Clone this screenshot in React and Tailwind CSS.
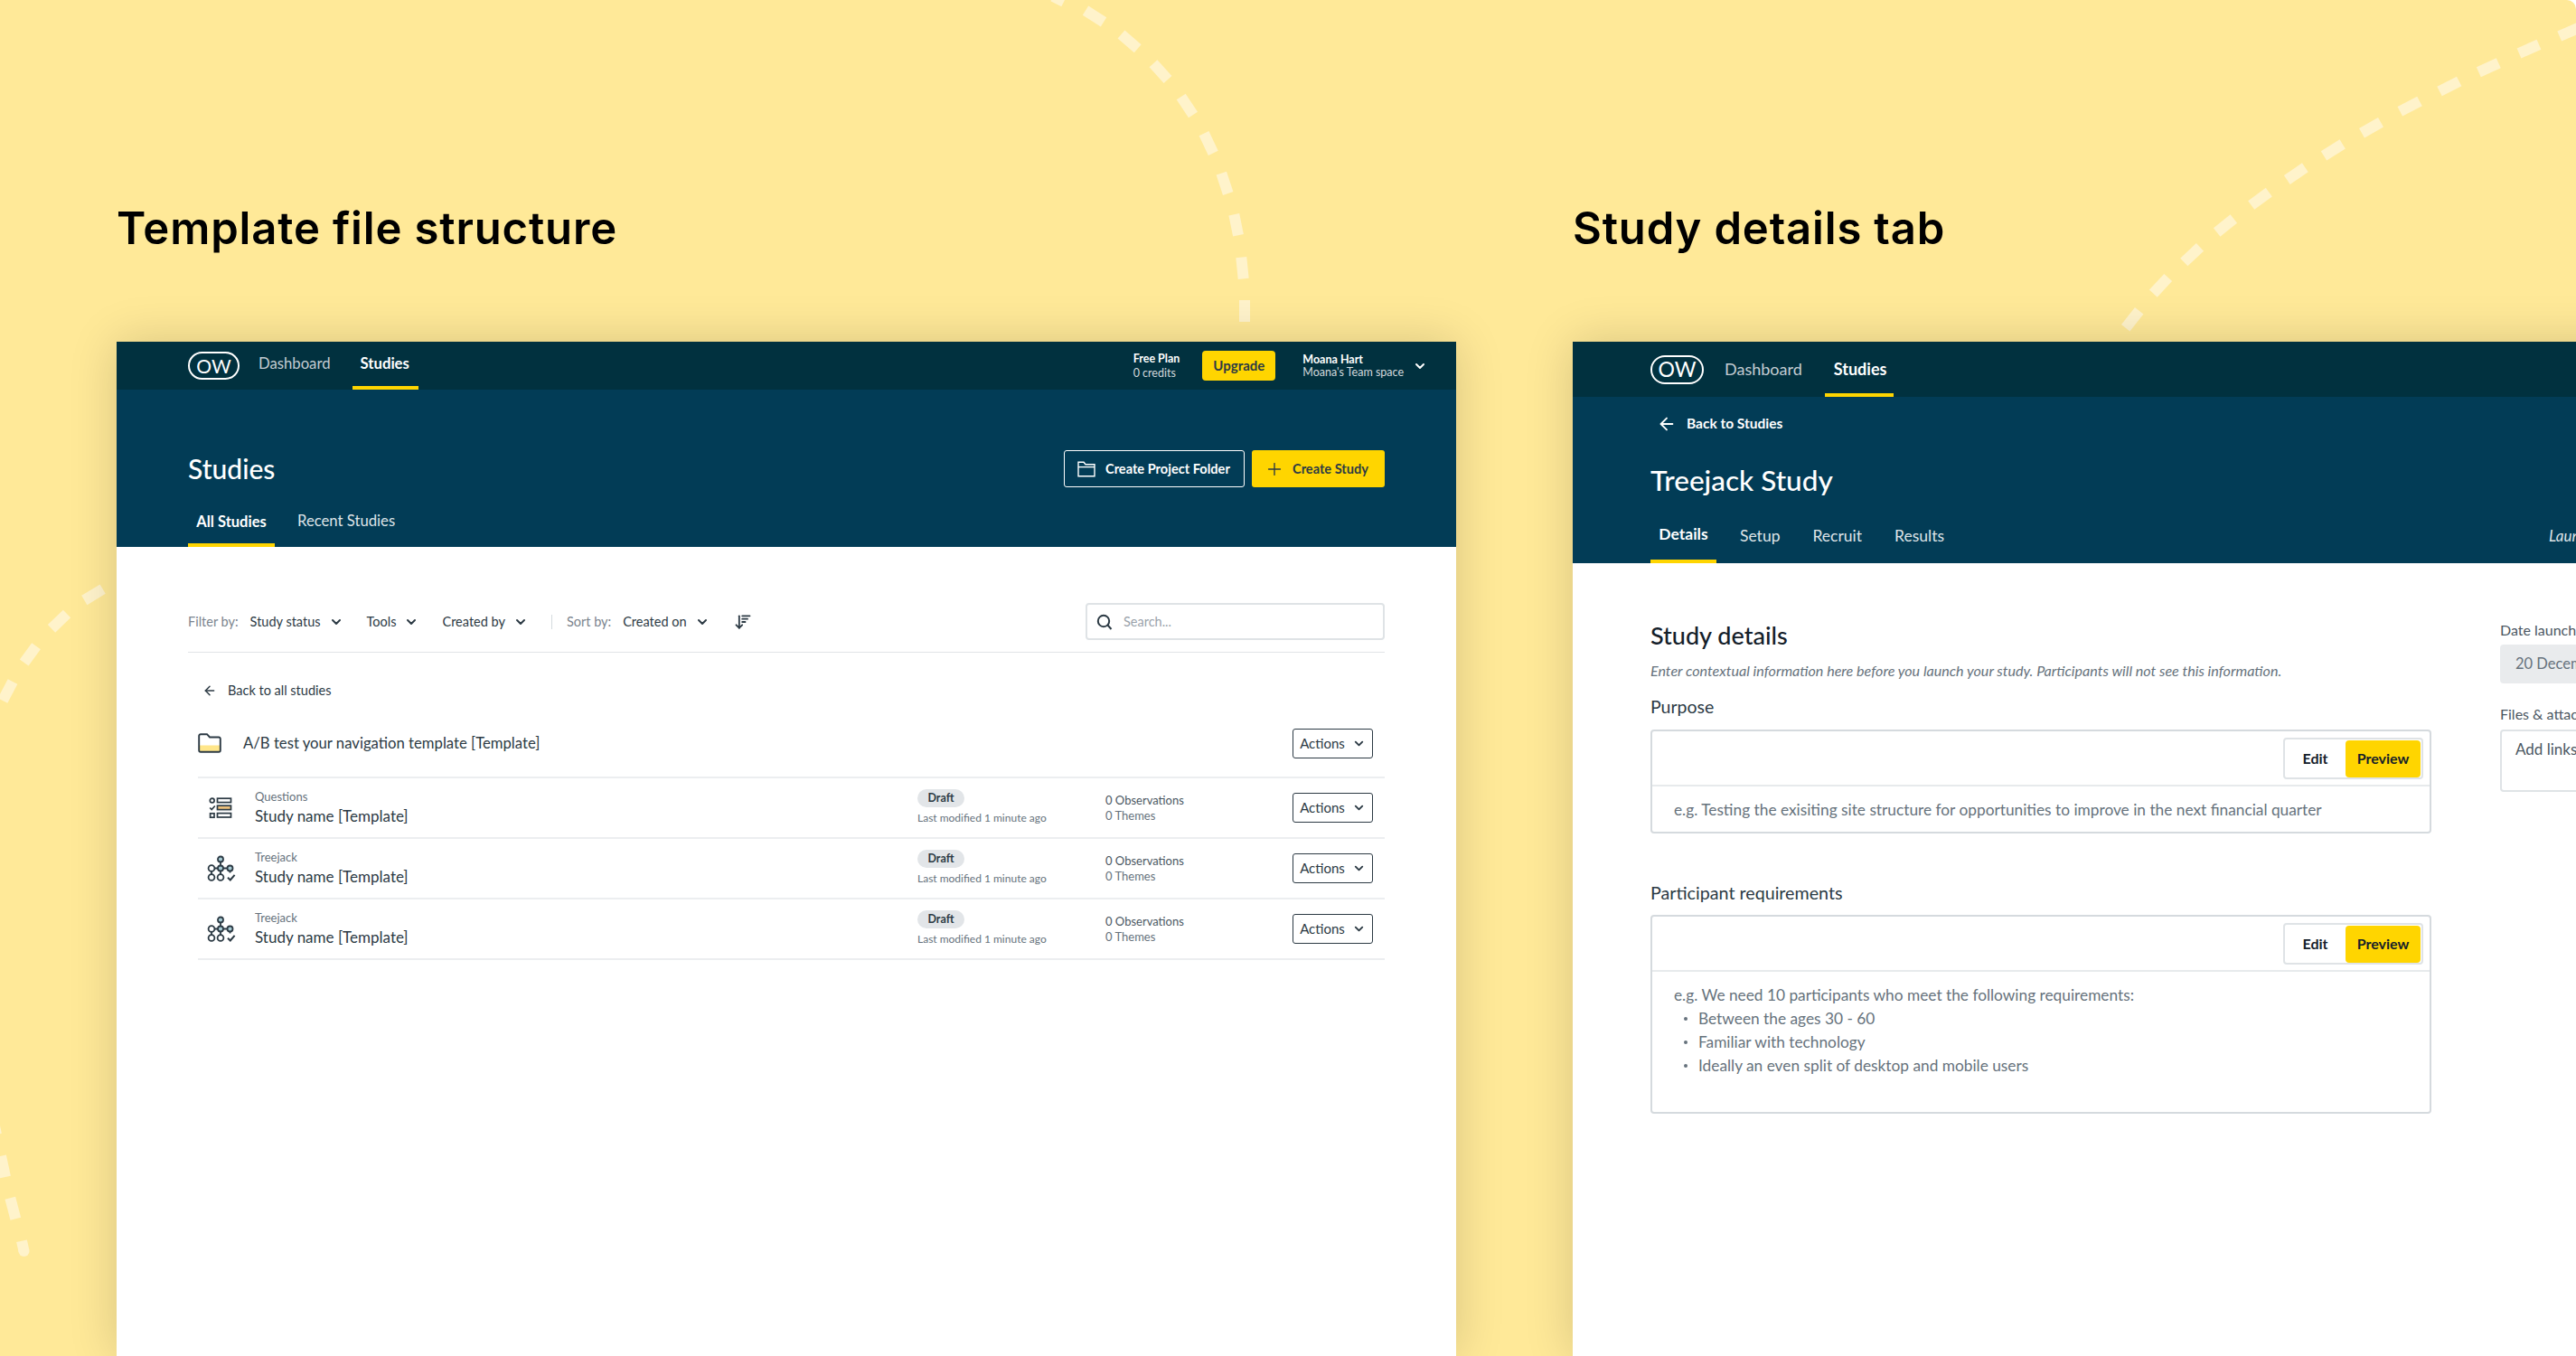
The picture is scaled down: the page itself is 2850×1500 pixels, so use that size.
import { ArrowLeft, ChevronDown, Plus, ArrowDownWideNarrow } from 'lucide-react';

// dash segments of the three background curves, taken from the reference
const dashes = [
    [1165, -4, 1177, 2], [1201, 11.7, 1221, 24.3], [1240.5, 38, 1258.7, 53.7], [1276, 70.3, 1292, 88],
    [1306.7, 107, 1320, 127], [1332, 147.7, 1342.3, 169.3], [1351.3, 191.7, 1358.7, 214], [1365.3, 237.3, 1370, 260.3],
    [1373.3, 284.7, 1375.7, 308.3], [1377, 332, 1377, 356],
    [2366.7, 343.7, 2351.7, 362.7], [2398.7, 307, 2382.3, 324.7], [2434, 273.3, 2416.3, 290], [2471.3, 242, 2452.7, 257],
    [2510.3, 212.7, 2490.7, 227], [2550.3, 185.3, 2530.3, 199], [2591.7, 159.3, 2571, 172.3], [2634, 135.3, 2613, 147.3],
    [2677, 112, 2655.3, 123.3], [2720.7, 90, 2699, 101], [2764.3, 69.7, 2742.3, 79.7], [2809, 49.3, 2787, 59], [2831.7, 40, 2855, 30],
    [113.7, 651.7, 93.3, 664], [74, 679, 57, 695.3], [40, 714.7, 26.7, 733], [14, 754, 3, 775],
    [-4, 1255, -9, 1232], [1, 1278.7, 6, 1302], [11.3, 1325.3, 17.3, 1348.3], [24, 1372.7, 26.5, 1384],
];

const rows = [
    { id: 1, type: 'Questions' },
    { id: 2, type: 'Treejack' },
    { id: 3, type: 'Treejack' },
];

const Dashes = () => (
    <svg className="absolute inset-0" width="2850" height="1500" viewBox="0 0 2850 1500" fill="none">
        {dashes.map((d, i) => (
            <line key={i} x1={d[0]} y1={d[1]} x2={d[2]} y2={d[3]} stroke="#fff3cb" strokeWidth="12" />
        ))}
        <circle cx="26.5" cy="1384" r="6" fill="#fff3cb" />
    </svg>
);

const Logo = ({ big }) => (
    <div className={big
        ? 'flex h-[32px] w-[59px] items-center justify-center rounded-[16px] border-2 border-white text-[23px] leading-none text-white'
        : 'flex h-[31px] w-[57px] items-center justify-center rounded-[16px] border-2 border-white text-[21px] leading-none text-white'}>
        OW
    </div>
);

const FolderOutline = () => (
    <svg width="20" height="18" viewBox="0 0 20 18" fill="none" stroke="#fff" strokeWidth="1.4">
        <path d="M1 1.2h6l2 2.6h10v13H1z" />
        <path d="M1 6.6h18" />
    </svg>
);

const FolderYellow = () => (
    <svg width="26" height="22" viewBox="0 0 26 22" fill="none">
        <path d="M1.2 13.5h23.6v5.5a1.8 1.8 0 0 1-1.8 1.8H3a1.8 1.8 0 0 1-1.8-1.8z" fill="#ffe68a" />
        <path d="M1.2 3a1.8 1.8 0 0 1 1.8-1.8h7l3 3.3h10a1.8 1.8 0 0 1 1.8 1.8V19a1.8 1.8 0 0 1-1.8 1.8H3A1.8 1.8 0 0 1 1.2 19z" stroke="#2c3a44" strokeWidth="1.9" />
    </svg>
);

const QuestionsIcon = () => (
    <svg width="26" height="24" viewBox="0 0 26 24" fill="none" stroke="#2c3a44" strokeWidth="1.7">
        <circle cx="3.7" cy="3.5" r="2.4" />
        <rect x="9.5" y="1.2" width="15" height="4.4" />
        <path d="M1.2 11.5l2 2 3.6-4" />
        <rect x="9.5" y="9.2" width="15" height="4.4" fill="#efc27c" />
        <rect x="1.6" y="17.8" width="4.4" height="4.4" />
        <rect x="9.5" y="17.6" width="15" height="4.4" />
    </svg>
);

const TreejackIcon = () => (
    <svg width="32" height="30" viewBox="0 0 32 30" fill="none" stroke="#2c3a44" strokeWidth="1.8">
        <circle cx="15" cy="4.5" r="3" fill="#a9cdd6" />
        <path d="M15 7.5v6M8.5 14.5h3.5M18 14.5h4.5M5 18v3M15 17.5v3.5" />
        <circle cx="5" cy="14.5" r="3.4" />
        <circle cx="15" cy="14.5" r="3" fill="#a9cdd6" />
        <circle cx="25.5" cy="14.5" r="3" fill="#a9cdd6" />
        <circle cx="5" cy="24.5" r="3.4" />
        <circle cx="15" cy="24.5" r="3.4" />
        <path d="M23 24.8l2.8 2.7 4.8-5.6" strokeWidth="2" />
        <path d="M25.5 17.5v2" />
    </svg>
);

const SearchIcon = () => (
    <svg width="18" height="18" viewBox="0 0 18 18" fill="none" stroke="#2c3a44" strokeWidth="2">
        <circle cx="8" cy="8" r="6.2" />
        <path d="M12.5 12.5l4 4.5" />
    </svg>
);

const Chevron = ({ className }) => <ChevronDown className={className} strokeWidth={3} />;

const NavLink = ({ active, big, children }) => (
    <div className={`flex h-full items-center border-b-4 ${big ? 'pt-[3px]' : 'pt-[1px]'} ${active
        ? 'border-[#ffd500] font-bold text-white'
        : 'border-transparent text-[#c3ccd2]'}`}>
        <span className={big ? 'px-[10px] text-[18px]' : 'px-[9px] text-[16.7px]'}>{children}</span>
    </div>
);

const Filter = ({ label, className }) => (
    <div className={`flex items-center text-[14.5px] text-[#2c3a44] ${className}`}>
        {label}
        <Chevron className="ml-[9px] h-[16px] w-[16px]" />
    </div>
);

const ActionsButton = () => (
    <div className="flex h-[33px] w-[89px] items-center justify-center gap-[8px] rounded-[3px] border border-[#2c3a44] bg-white text-[15px] text-[#2c3a44]">
        Actions
        <Chevron className="h-[15px] w-[15px]" />
    </div>
);

const StudyRow = ({ type }) => (
    <div className="grid h-[67px] grid-cols-[63px_733px_208px_1fr] items-center border-b-2 border-[#eceef0]">
        <div className={type === 'Questions' ? 'flex pl-[12px]' : 'flex pl-[10px]'}>
            {type === 'Questions' ? <QuestionsIcon /> : <TreejackIcon />}
        </div>
        <div>
            <p className="text-[13px] leading-[16px] text-[#66727c]">{type}</p>
            <p className="mt-[3px] text-[17px] leading-[22px] text-[#2c3a44]">Study name [Template]</p>
        </div>
        <div>
            <div className="flex h-[20px] w-[52px] items-center justify-center rounded-full bg-[#e2e5e8] text-[12.5px] font-bold text-[#2c3a44]">Draft</div>
            <p className="mt-[3px] text-[12px] leading-[18px] text-[#66727c]">Last modified 1 minute ago</p>
        </div>
        <div className="flex items-center justify-between pr-[13px]">
            <div className="text-[13px] leading-[17px] text-[#4b5762]">
                <p>0 Observations</p>
                <p className="text-[#66727c]">0 Themes</p>
            </div>
            <ActionsButton />
        </div>
    </div>
);

const EditorBox = ({ height, children }) => (
    <div className={`${height} rounded-[4px] border-2 border-[#d5dade]`}>
        <div className="flex h-[61px] justify-end border-b-2 border-[#e7eaec] pt-[7px] pr-[7px]">
            <div className="flex h-[46px] w-[155px] items-center justify-between rounded-[4px] border-2 border-[#dfe3e6] pr-[1px]">
                <span className="w-[68px] text-center text-[16px] font-bold text-[#14202a]">Edit</span>
                <span className="flex h-[41px] w-[84px] items-center justify-center rounded-[4px] bg-[#ffd500] text-[16px] font-bold text-[#14202a]">Preview</span>
            </div>
        </div>
        <div className="px-[24px] text-[17.3px] leading-[26px] text-[#66727c]">{children}</div>
    </div>
);

export default function App() {
    return (
        <div className="relative flex h-[1500px] w-[2850px] overflow-hidden rounded-tr-[10px] bg-[#ffe998] font-['Lato',sans-serif]">
            <Dashes />

            <div className="relative ml-[129px] w-[1482px] shrink-0">
                <h2 className="flex h-[378px] items-start pt-[223px] font-['Inter',sans-serif] text-[49px] leading-[60px] font-semibold tracking-[0.85px] text-black">Template file structure</h2>
                <div className="h-[1122px] bg-white shadow-[0_0_50px_rgba(0,0,0,0.16)]">
                    <div className="flex h-[53px] items-center bg-[#01313f] pr-[32px] pl-[79px]">
                        <Logo />
                        <div className="ml-[12px] flex h-full items-center">
                            <NavLink>Dashboard</NavLink>
                            <div className="ml-[15px] h-full w-[73px]"><NavLink active>Studies</NavLink></div>
                        </div>
                        <div className="ml-auto flex items-center">
                            <div className="text-[12.5px] leading-[16px] text-white">
                                <p className="font-bold">Free Plan</p>
                                <p className="text-[#d3d9dd]">0 credits</p>
                            </div>
                            <div className="ml-[25px] flex h-[33px] w-[81px] items-center justify-center rounded-[4px] bg-[#ffd500] text-[15px] font-bold text-[#2c3a44]">Upgrade</div>
                            <div className="ml-[30px] text-[12.5px] leading-[14px] text-white">
                                <p className="font-bold">Moana Hart</p>
                                <p className="text-[#d3d9dd]">Moana's Team space</p>
                            </div>
                            <Chevron className="ml-[10px] h-[16px] w-[16px] text-white" />
                        </div>
                    </div>

                    <div className="flex h-[174px] flex-col justify-end bg-[#023c56] px-[79px]">
                        <div className="flex items-center justify-between">
                            <h1 className="text-[30px] leading-[41px] font-medium text-white">Studies</h1>
                            <div className="flex gap-[8px]">
                                <div className="flex h-[41px] w-[200px] items-center gap-[11px] rounded-[3px] border border-white pl-[14px] text-[14.6px] font-bold text-white">
                                    <FolderOutline />
                                    Create Project Folder
                                </div>
                                <div className="flex h-[41px] w-[147px] items-center gap-[9px] rounded-[3px] bg-[#ffd500] pl-[14px] text-[14.6px] font-bold text-[#2c3a44]">
                                    <Plus className="h-[22px] w-[22px]" strokeWidth={1.5} />
                                    Create Study
                                </div>
                            </div>
                        </div>
                        <div className="mt-[10px] flex h-[56px] items-end gap-[16px]">
                            <div className="flex h-full w-[96px] items-center justify-center border-b-4 border-[#ffd500] pt-[4px] text-[16.5px] font-bold text-white">All Studies</div>
                            <div className="flex h-full items-center px-[9px] text-[16.7px] text-[#dfe4e8]">Recent Studies</div>
                        </div>
                    </div>

                    <div className="px-[79px]">
                        <div className="flex items-center border-b border-[#e1e4e7] pt-[62px] pb-[13px]">
                            <span className="text-[14.5px] text-[#7b858e]">Filter by:</span>
                            <Filter label="Study status" className="ml-[13px]" />
                            <Filter label="Tools" className="ml-[26px]" />
                            <Filter label="Created by" className="ml-[26px]" />
                            <div className="mr-[16px] ml-[26px] h-[16px] w-[1px] bg-[#d5dade]" />
                            <span className="text-[14.5px] text-[#7b858e]">Sort by:</span>
                            <Filter label="Created on" className="ml-[13px]" />
                            <ArrowDownWideNarrow className="ml-[27px] h-[20px] w-[20px] text-[#2c3a44]" strokeWidth={2.2} />
                            <div className="ml-auto flex h-[41px] w-[331px] items-center gap-[12px] rounded-[4px] border-2 border-[#dfe3e6] pl-[10px] text-[14.5px] text-[#9aa3ab]">
                                <SearchIcon />
                                Search...
                            </div>
                        </div>

                        <div className="ml-[11px]">
                            <div className="flex h-[64px] items-center gap-[12px] pt-[20px] pl-[5px] text-[14.5px] text-[#2c3a44]">
                                <ArrowLeft className="h-[16px] w-[16px]" strokeWidth={2.2} />
                                Back to all studies
                            </div>
                            <div className="flex h-[75px] items-center justify-between border-b-2 border-[#eceef0] pr-[13px]">
                                <div className="flex items-center gap-[24px]">
                                    <FolderYellow />
                                    <span className="text-[16.7px] text-[#2c3a44]">A/B test your navigation template [Template]</span>
                                </div>
                                <ActionsButton />
                            </div>
                            {rows.map(row => (
                                <StudyRow key={row.id} type={row.type} />
                            ))}
                        </div>
                    </div>
                </div>
            </div>

            <div className="relative ml-[129px] w-[1500px] shrink-0">
                <h2 className="flex h-[378px] items-start pt-[223px] font-['Inter',sans-serif] text-[49px] leading-[60px] font-semibold tracking-[0.85px] text-black">Study details tab</h2>
                <div className="h-[1122px] bg-white shadow-[0_0_50px_rgba(0,0,0,0.16)]">
                    <div className="flex h-[61px] items-center bg-[#01313f] pl-[86px]">
                        <Logo big />
                        <div className="ml-[13px] flex h-full items-center">
                            <NavLink big>Dashboard</NavLink>
                            <div className="ml-[15px] h-full w-[76px]"><NavLink active big>Studies</NavLink></div>
                        </div>
                    </div>

                    <div className="h-[184px] bg-[#023c56] pt-[19px] pl-[86px]">
                        <div className="flex h-[22px] items-center gap-[11px] pl-[7px] text-[15.5px] font-bold text-white">
                            <ArrowLeft className="h-[22px] w-[22px]" strokeWidth={2} />
                            Back to Studies
                        </div>
                        <h1 className="mt-[26px] h-[50px] text-[31.5px] leading-[50px] font-medium text-white">Treejack Study</h1>
                        <div className="mt-[5px] flex h-[62px] gap-[16px]">
                            <div className="flex h-full w-[73px] items-center justify-center border-b-4 border-[#ffd500] pt-[3px] text-[17.5px] font-bold text-white">Details</div>
                            {['Setup', 'Recruit', 'Results'].map(tab => (
                                <div key={tab} className="flex h-full items-center px-[10px] pt-[2px] text-[17.5px] text-[#dfe4e8]">{tab}</div>
                            ))}
                            <div className="ml-[643px] flex h-full items-center pt-[2px] text-[17px] whitespace-nowrap text-[#dfe4e8] italic">Launched 20 December</div>
                        </div>
                    </div>

                    <div className="flex gap-[76px] pt-[62px] pl-[86px]">
                        <div className="w-[864px]">
                            <h3 className="text-[27px] leading-[36px] font-medium text-[#14202a]">Study details</h3>
                            <p className="mt-[11px] text-[16.1px] leading-[20px] text-[#66727c] italic">Enter contextual information here before you launch your study. Participants will not see this information.</p>
                            <p className="mt-[18px] text-[19.5px] leading-[24px] text-[#2c3a44]">Purpose</p>
                            <div className="mt-[13px]">
                                <EditorBox height="h-[115px]">
                                    <p className="pt-[13px]">e.g. Testing the exisiting site structure for opportunities to improve in the next financial quarter</p>
                                </EditorBox>
                            </div>
                            <p className="mt-[54px] text-[19.7px] leading-[24px] text-[#2c3a44]">Participant requirements</p>
                            <div className="mt-[12px]">
                                <EditorBox height="h-[220px]">
                                    <p className="pt-[13px]">e.g. We need 10 participants who meet the following requirements:</p>
                                    <ul>
                                        {['Between the ages 30 - 60', 'Familiar with technology', 'Ideally an even split of desktop and mobile users'].map(item => (
                                            <li key={item} className="flex items-center">
                                                <span className="mr-[12px] ml-[11px] h-[4px] w-[4px] rounded-full bg-[#66727c]" />
                                                {item}
                                            </li>
                                        ))}
                                    </ul>
                                </EditorBox>
                            </div>
                        </div>
                        <div className="w-[400px]">
                            <p className="text-[16px] leading-[24px] text-[#4b5762]">Date launched</p>
                            <div className="mt-[4px] flex h-[43px] items-center rounded-[4px] bg-[#e9ebed] pl-[17px] text-[16.5px] text-[#66727c]">20 December 2022</div>
                            <p className="mt-[22px] text-[16px] leading-[24px] text-[#4b5762]">Files & attachments</p>
                            <div className="mt-[5px] h-[69px] rounded-[4px] border-2 border-[#dfe3e6] pt-[7px] pl-[15px] text-[17px] text-[#4b5762]">Add links to files</div>
                        </div>
                    </div>
                </div>
            </div>
        </div>
    );
}
